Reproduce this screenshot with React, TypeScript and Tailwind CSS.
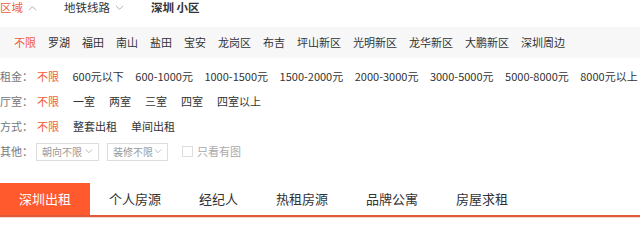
import { ReactNode } from "react"

const districts = ["罗湖", "福田", "南山", "盐田", "宝安", "龙岗区", "布吉", "坪山新区", "光明新区", "龙华新区", "大鹏新区", "深圳周边"]
const rents = ["600元以下", "600-1000元", "1000-1500元", "1500-2000元", "2000-3000元", "3000-5000元", "5000-8000元", "8000元以上"]
const rooms = ["一室", "两室", "三室", "四室", "四室以上"]
const modes = ["整套出租", "单间出租"]
const tabs = ["个人房源", "经纪人", "热租房源", "品牌公寓", "房屋求租"]

function Chevron({ up = false, className = "" }: { up?: boolean; className?: string }) {
  return (
    <svg viewBox="0 0 10 6" className={className} fill="none" stroke="currentColor" strokeWidth="1">
      {up ? <path d="M1 5.5 5 1.5 9 5.5" /> : <path d="M1 0.5 5 4.5 9 0.5" />}
    </svg>
  )
}

function FilterRow({ label, gap = "gap-x-[14px]", children }: { label: string; gap?: string; children: ReactNode }) {
  return (
    <div className="flex h-[25px] items-center whitespace-nowrap text-[11px]">
      <span className="w-[37px] shrink-0 text-[#777]">{label}</span>
      <div className={`flex shrink-0 items-center ${gap}`}>{children}</div>
    </div>
  )
}

function Select({ label, width }: { label: string; width: string }) {
  return (
    <div className={`flex h-[18px] shrink-0 items-center justify-between whitespace-nowrap border border-[#ddd] pl-[5px] pr-[5px] text-[10px] text-[#999] ${width}`}>
      <span>{label}</span>
      <Chevron className="h-[5px] w-[8px] text-[#aaa]" />
    </div>
  )
}

export default function App() {
  return (
    <div className="h-[231px] w-[640px] overflow-hidden whitespace-nowrap bg-white font-['Noto_Sans_CJK_SC',sans-serif] text-[#333]">
      <div className="flex h-[15px] items-center text-[11.5px]">
        <span className="text-[#f0603c]">区域</span>
        <Chevron up className="ml-[5px] h-[6px] w-[9px] text-[#aaa]" />
        <span className="ml-[27px]">地铁线路</span>
        <Chevron className="ml-[5px] h-[6px] w-[9px] text-[#aaa]" />
        <span className="ml-[27px] font-bold">深圳 小区</span>
      </div>

      <div className="mt-[12px] flex h-[31px] items-center gap-x-[12px] bg-[#f7f7f7] pl-[14px] text-[11px]">
        <span className="text-[#f0603c]">不限</span>
        {districts.map((d) => (
          <span key={d}>{d}</span>
        ))}
      </div>

      <div className="mt-[6px]">
        <FilterRow label="租金：" gap="gap-x-[11.5px]">
          <span className="mr-[2px] text-[#f0603c]">不限</span>
          {rents.map((r) => (
            <span key={r}>{r}</span>
          ))}
        </FilterRow>
        <FilterRow label="厅室：">
          <span className="text-[#f0603c]">不限</span>
          {rooms.map((r) => (
            <span key={r}>{r}</span>
          ))}
        </FilterRow>
        <FilterRow label="方式：">
          <span className="text-[#f0603c]">不限</span>
          {modes.map((m) => (
            <span key={m}>{m}</span>
          ))}
        </FilterRow>
        <div className="flex h-[25px] items-center text-[11px]">
          <span className="w-[36px] shrink-0 text-[#777]">其他：</span>
          <Select label="朝向不限" width="w-[63px]" />
          <div className="ml-[8px]">
            <Select label="装修不限" width="w-[61px]" />
          </div>
          <span className="ml-[14px] h-[11px] w-[11px] shrink-0 border border-[#ddd]" />
          <span className="ml-[4px] text-[#aaa]">只看有图</span>
        </div>
      </div>

      <div className="mt-[19px]">
        <div className="flex h-[32px] items-center text-[13px]">
          <div className="flex h-full items-center bg-[#ff5a2d] px-[19px] text-white">深圳出租</div>
          {tabs.map((t) => (
            <div key={t} className="flex h-full items-center px-[19px] text-[#333]">
              {t}
            </div>
          ))}
        </div>
        <div className="h-[2px] bg-[#e0583a]" />
        <div className="h-[1px] bg-[#f5d8d0]" />
      </div>
    </div>
  )
}
